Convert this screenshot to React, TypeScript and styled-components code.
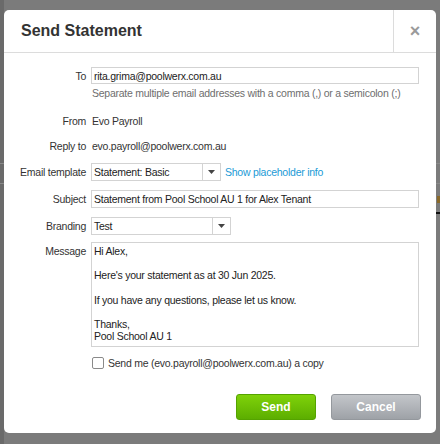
import React from "react";
import styled, { createGlobalStyle } from "styled-components";

const Global = createGlobalStyle`
  html, body { margin: 0; padding: 0; }
  body {
    width: 440px;
    height: 444px;
    overflow: hidden;
    background: #7b7b7b;
    font-family: "Liberation Sans", Arial, sans-serif;
  }
`;

const Backdrop = styled.div`
  width: 440px;
  height: 444px;
  padding: 10px 4px 0 4px;
  box-sizing: border-box;
  background:
    linear-gradient(#8a8a8a, #8a8a8a) 0 163px / 440px 1px no-repeat,
    linear-gradient(#8a8a8a, #8a8a8a) 0 183px / 440px 1px no-repeat,
    linear-gradient(#111, #111) 436px 212px / 4px 2px no-repeat,
    linear-gradient(#8a6a2a, #8a6a2a) 437px 196px / 3px 7px no-repeat,
    linear-gradient(to right, #6a6a6a 0 4px, #7b7b7b 4px);
`;

const Dialog = styled.div`
  width: 432px;
  height: 423px;
  background: #fff;
  border-radius: 5px;
  display: flex;
  flex-direction: column;
  box-sizing: border-box;
`;

const Header = styled.div`
  display: flex;
  height: 43px;
  border-bottom: 1px solid #dcdcdc;
  box-sizing: border-box;
`;

const Title = styled.h1`
  flex: 1;
  margin: 0;
  padding-left: 17px;
  display: flex;
  align-items: center;
  font-family: "Liberation Sans", Arial, sans-serif;
  font-size: 16px;
  font-weight: bold;
  color: #333;
`;

const Close = styled.div`
  width: 42px;
  border-left: 1px solid #dcdcdc;
  display: flex;
  align-items: center;
  justify-content: center;
  color: #9a9a9a;
  font-size: 18px;
  font-weight: bold;
`;

const Body = styled.div`
  display: flex;
  flex-direction: column;
  padding: 14px 17px 0 0;
  font-family: "Liberation Sans", Tahoma, sans-serif;
  font-size: 10.5px;
  letter-spacing: -0.25px;
  color: #333;
`;

const Row = styled.div<{ $mt?: number; $h?: number; $top?: boolean }>`
  display: flex;
  align-items: ${(p) => (p.$top ? "flex-start" : "center")};
  margin-top: ${(p) => p.$mt ?? 0}px;
  min-height: ${(p) => p.$h ?? 14}px;
`;

const Label = styled.div<{ $top?: number }>`
  width: 82px;
  flex: none;
  text-align: right;
  padding-right: 5px;
  padding-top: ${(p) => p.$top ?? 0}px;
  box-sizing: content-box;
  white-space: nowrap;
`;

const Value = styled.div`
  padding-left: 1px;
`;

const Hint = styled.div`
  color: #6e6e6e;
  padding-left: 88px;
  margin-top: 2px;
  height: 14px;
  line-height: 14px;
  white-space: nowrap;
`;

const TextInput = styled.div<{ $h?: number }>`
  flex: 1;
  height: ${(p) => p.$h ?? 17}px;
  border: 1px solid #d3d3d3;
  box-sizing: border-box;
  display: flex;
  align-items: center;
  padding-left: 2px;
  color: #222;
`;

const Select = styled.div<{ $w: number }>`
  width: ${(p) => p.$w}px;
  height: 18px;
  border: 1px solid #d3d3d3;
  box-sizing: border-box;
  display: flex;
  color: #222;
`;

const SelectText = styled.div`
  flex: 1;
  display: flex;
  align-items: center;
  padding-left: 2px;
`;

const SelectArrow = styled.div`
  width: 17px;
  border-left: 1px solid #d3d3d3;
  display: flex;
  align-items: center;
  justify-content: center;
`;

const Link = styled.span`
  color: #1a9ad6;
  margin-left: 4px;
`;

const TextArea = styled.div`
  flex: 1;
  height: 105px;
  border: 1px solid #d3d3d3;
  box-sizing: border-box;
  padding: 2px 2px;
  line-height: 12.15px;
  color: #222;
  white-space: pre-wrap;
`;

const CheckRow = styled.label`
  display: flex;
  align-items: center;
  margin-top: 10px;
  padding-left: 88px;
  height: 12px;
  gap: 4px;
  color: #333;
`;

const Box = styled.span`
  width: 10px;
  height: 10px;
  border: 1px solid #8a8a8a;
  border-radius: 2px;
  background: #fff;
  flex: none;
`;

const Footer = styled.div`
  display: flex;
  justify-content: flex-end;
  gap: 15px;
  padding: 25px 15px 0 0;
`;

const Button = styled.button<{ $kind: "primary" | "secondary" }>`
  height: 26px;
  width: ${(p) => (p.$kind === "primary" ? 80 : 90)}px;
  border-radius: 3px;
  border: 1px solid ${(p) => (p.$kind === "primary" ? "#55a300" : "#94989d")};
  background: ${(p) =>
    p.$kind === "primary"
      ? "linear-gradient(#7fd20a, #5cae00)"
      : "linear-gradient(#c3c6ca, #9ea2a7)"};
  color: #fff;
  font-family: "Liberation Sans", Arial, sans-serif;
  font-weight: bold;
  font-size: 12px;
  padding: 0;
`;

const Arrow = () => (
  <svg width="7" height="4" viewBox="0 0 7 4">
    <path d="M0 0h7L3.5 4z" fill="#444" />
  </svg>
);

const message = `Hi Alex,

Here's your statement as at 30 Jun 2025.

If you have any questions, please let us know.

Thanks,
Pool School AU 1`;

export default function App() {
  return (
    <>
      <Global />
      <Backdrop>
        <Dialog>
          <Header>
            <Title>Send Statement</Title>
            <Close>×</Close>
          </Header>
          <Body>
            <Row $h={17}>
              <Label>To</Label>
              <TextInput>rita.grima@poolwerx.com.au</TextInput>
            </Row>
            <Hint>Separate multiple email addresses with a comma (,) or a semicolon (;)</Hint>
            <Row $mt={14}>
              <Label>From</Label>
              <Value>Evo Payroll</Value>
            </Row>
            <Row $mt={11}>
              <Label>Reply to</Label>
              <Value>evo.payroll@poolwerx.com.au</Value>
            </Row>
            <Row $mt={10} $h={18}>
              <Label>Email template</Label>
              <Select $w={130}>
                <SelectText>Statement: Basic</SelectText>
                <SelectArrow><Arrow /></SelectArrow>
              </Select>
              <Link>Show placeholder info</Link>
            </Row>
            <Row $mt={9} $h={18}>
              <Label>Subject</Label>
              <TextInput $h={18}>Statement from Pool School AU 1 for Alex Tenant</TextInput>
            </Row>
            <Row $mt={9} $h={18}>
              <Label>Branding</Label>
              <Select $w={140}>
                <SelectText>Test</SelectText>
                <SelectArrow><Arrow /></SelectArrow>
              </Select>
            </Row>
            <Row $mt={7} $top>
              <Label $top={3}>Message</Label>
              <TextArea>{message}</TextArea>
            </Row>
            <CheckRow>
              <Box />
              Send me (evo.payroll@poolwerx.com.au) a copy
            </CheckRow>
          </Body>
          <Footer>
            <Button $kind="primary">Send</Button>
            <Button $kind="secondary">Cancel</Button>
          </Footer>
        </Dialog>
      </Backdrop>
    </>
  );
}
